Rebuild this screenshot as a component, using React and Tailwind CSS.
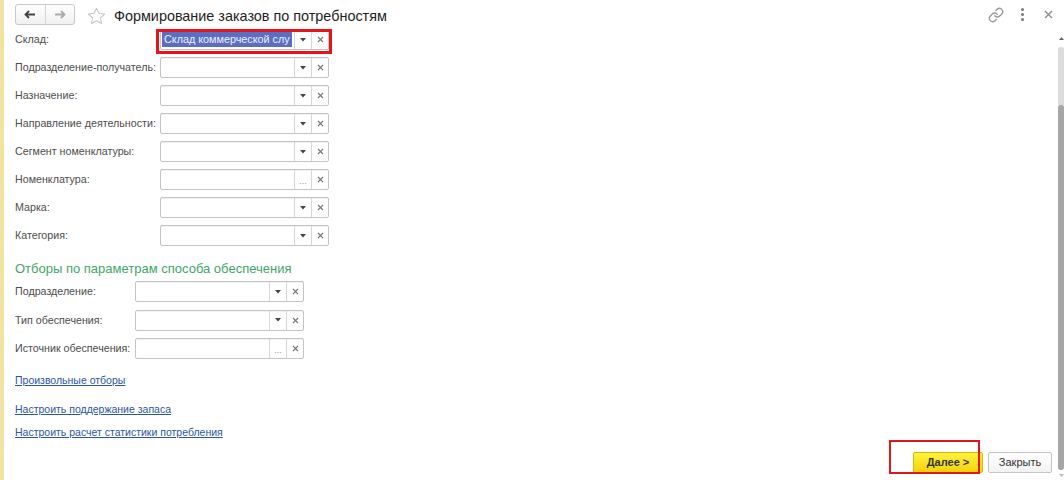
import React from "react";

const F = { fontFamily: '"Liberation Sans", Arial, sans-serif' };

function Field({ kind = "drop", selected, width = "w-[169px]" }) {
  return (
    <div className={`flex h-[21px] ${width} border border-[#c4c4c4] rounded-[2px] bg-white shadow-[inset_0_1px_1px_rgba(0,0,0,0.06)]`}>
      <div className="flex-1 flex items-center pl-[1px] overflow-hidden">
        {selected ? (
          <span className="bg-[#5a6fc2] text-[#eef0fa] text-[10.8px] leading-[15px] px-[2px] whitespace-nowrap">
            {selected}
          </span>
        ) : null}
      </div>
      <div className="w-[17px] border-l border-[#d6d6d6] flex items-center justify-center text-[#555]">
        {kind === "drop" ? (
          <svg width="6" height="4" viewBox="0 0 6 4"><path d="M0 0h6L3 3.5z" fill="#444" /></svg>
        ) : (
          <span className="text-[9px] text-[#999] leading-none mt-[4px]">...</span>
        )}
      </div>
      <div className="w-[17px] border-l border-[#d6d6d6] flex items-center justify-center">
        <svg width="7" height="7" viewBox="0 0 7 7"><path d="M1 1l5 5M6 1L1 6" stroke="#777" strokeWidth="1.1" /></svg>
      </div>
    </div>
  );
}

function Row({ label, labelW, kind, selected }) {
  return (
    <div className="flex items-center h-[21px]">
      <div className={`${labelW} text-[10.7px] text-[#4d4d4d] whitespace-nowrap`}>{label}</div>
      <Field kind={kind} selected={selected} />
    </div>
  );
}

export default function App() {
  const group1 = [
    ["Склад:", "drop", "Склад коммерческой слу"],
    ["Подразделение-получатель:", "drop"],
    ["Назначение:", "drop"],
    ["Направление деятельности:", "drop"],
    ["Сегмент номенклатуры:", "drop"],
    ["Номенклатура:", "dots"],
    ["Марка:", "drop"],
    ["Категория:", "drop"],
  ];
  const group2 = [
    ["Подразделение:", "drop"],
    ["Тип обеспечения:", "drop"],
    ["Источник обеспечения:", "dots"],
  ];
  return (
    <div style={F} className="relative w-[1064px] h-[480px] bg-white flex overflow-hidden">
      <div className="w-[4px] h-full bg-[#f3e3a0]" />
      <div className="flex-1 flex flex-col">
        {/* header */}
        <div className="h-[29px] flex items-center pl-[11px] pr-[11px]">
          <div className="flex h-[21px] w-[60px] border border-[#c9c9c9] rounded-[3px] bg-gradient-to-b from-white to-[#f0f0f0]">
            <div className="flex-1 flex items-center justify-center border-r border-[#d4d4d4]">
              <svg width="12" height="9" viewBox="0 0 12 9"><path d="M11 4.5H2M5 1L1.5 4.5 5 8" stroke="#444" strokeWidth="1.8" fill="none" /></svg>
            </div>
            <div className="flex-1 flex items-center justify-center">
              <svg width="12" height="9" viewBox="0 0 12 9"><path d="M1 4.5h9M7 1l3.5 3.5L7 8" stroke="#aaa" strokeWidth="1.8" fill="none" /></svg>
            </div>
          </div>
          <svg className="ml-[12px] mt-[2px]" width="19" height="18" viewBox="0 0 24 23">
            <path d="M12 1.5l3.1 6.6 7.2.9-5.3 5 1.4 7.1L12 17.6l-6.4 3.5 1.4-7.1-5.3-5 7.2-.9z" fill="none" stroke="#c4c4c4" strokeWidth="1.3" strokeLinejoin="round" />
          </svg>
          <div className="ml-[8px] mt-[3px] text-[14.4px] text-[#1e1e1e] leading-none whitespace-nowrap">Формирование заказов по потребностям</div>
          <div className="flex-1" />
          <svg width="16" height="16" viewBox="0 0 24 24" fill="none" stroke="#999" strokeWidth="2" strokeLinecap="round" strokeLinejoin="round">
            <path d="M10 13a5 5 0 0 0 7.54.54l3-3a5 5 0 0 0-7.07-7.07l-1.72 1.71" />
            <path d="M14 11a5 5 0 0 0-7.54-.54l-3 3a5 5 0 0 0 7.07 7.07l1.71-1.71" />
          </svg>
          <div className="ml-[17px] flex flex-col gap-[2px]">
            <div className="w-[3px] h-[3px] bg-[#777] rounded-full" />
            <div className="w-[3px] h-[3px] bg-[#777] rounded-full" />
            <div className="w-[3px] h-[3px] bg-[#777] rounded-full" />
          </div>
          <svg className="ml-[20px]" width="9" height="9" viewBox="0 0 9 9"><path d="M1 1l7 7M8 1L1 8" stroke="#888" strokeWidth="1.3" /></svg>
        </div>
        {/* body */}
        <div className="flex-1 flex">
          <div className="flex-1 flex flex-col pl-[11px]">
            <div className="flex flex-col gap-[7px]">
              {group1.map(([l, k, s]) => (
                <Row key={l} label={l} labelW="w-[145px]" kind={k} selected={s} />
              ))}
            </div>
            <div className="mt-[13px] text-[13px] text-[#43a569] leading-[20px] whitespace-nowrap">
              Отборы по параметрам способа обеспечения
            </div>
            <div className="mt-[2px] flex flex-col gap-[7.5px]">
              {group2.map(([l, k]) => (
                <Row key={l} label={l} labelW="w-[120px]" kind={k} />
              ))}
            </div>
            <div className="mt-[14px] flex flex-col text-[10.5px] text-[#2c55a0] underline leading-[14px]">
              <span>Произвольные отборы</span>
              <span className="mt-[15px]">Настроить поддержание запаса</span>
              <span className="mt-[9px]">Настроить расчет статистики потребления</span>
            </div>
            <div className="flex-1" />
            <div className="flex justify-end gap-[5px] pr-[6px] pb-[7px]">
              <div className="w-[70px] h-[21px] rounded-[2px] border border-[#d8b800] bg-gradient-to-b from-[#fff23a] to-[#f2d400] flex items-center justify-center text-[11px] font-bold text-[#333]">
                Далее &gt;
              </div>
              <div className="w-[64px] h-[21px] rounded-[2px] border border-[#c4c4c4] bg-gradient-to-b from-white to-[#f2f2f2] flex items-center justify-center text-[11px] text-[#333]">
                Закрыть
              </div>
            </div>
          </div>
          {/* scrollbar */}
          <div className="w-[6px] flex flex-col items-center pt-[8px] pb-[3px]">
            <svg width="5" height="3" viewBox="0 0 5 3"><path d="M0 3h5L2.5 0z" fill="#666" /></svg>
            <div className="mt-[7px] w-[6px] flex-1 flex flex-col rounded-[2px] overflow-hidden">
              <div className="h-[58px] bg-[#dcdcdc]" />
              <div className="flex-1 bg-[#a6a6a6] rounded-[2px]" />
            </div>
            <svg className="mt-[4px]" width="5" height="3" viewBox="0 0 5 3"><path d="M0 0h5L2.5 3z" fill="#bbb" /></svg>
          </div>
        </div>
      </div>
      {/* red annotation outlines */}
      <div className="absolute left-[156px] top-[29px] w-[176px] h-[25px] border-[3px] border-[#e8141b]" />
      <div className="absolute left-[889px] top-[440px] w-[91px] h-[34px] border-[2px] border-[#e8141b]" />
    </div>
  );
}
